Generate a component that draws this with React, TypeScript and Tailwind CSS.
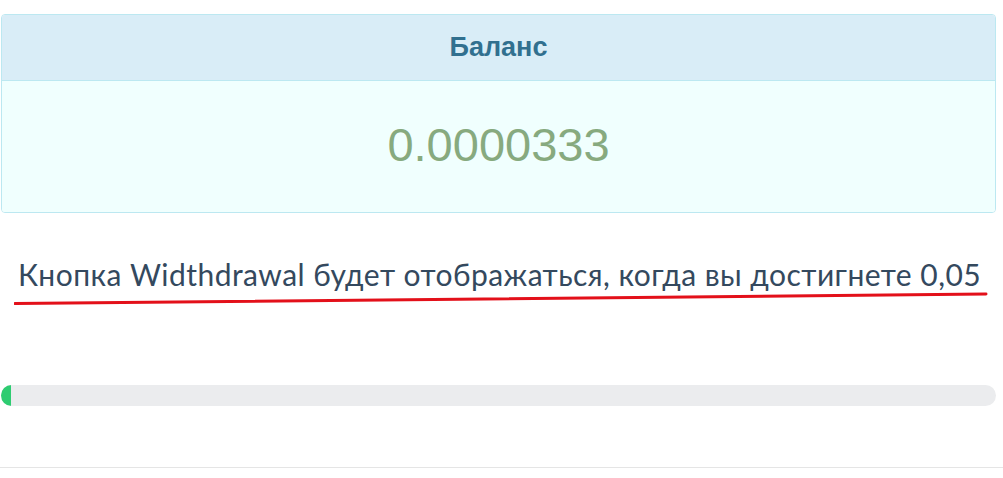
export default function App() {
  const balance = 0.0000333;
  const target = 0.05;
  const percent = Math.max((balance / target) * 100, 1);

  return (
    <div className="w-[1003px] h-[478px] bg-white overflow-hidden">
      <div className="pt-[14px] pl-[1px] pr-[7px]">
        <div className="rounded-[4px] border border-[#bce8f1] overflow-hidden">
          <div className="h-[66px] bg-[#d9edf7] border-b border-[#bce8f1] flex items-center justify-center">
            <h3 className="text-[#31708f] font-bold text-[27px] font-['Liberation_Sans',Arial,sans-serif]">
              Баланс
            </h3>
          </div>
          <div className="h-[131px] bg-[#f0fffe] flex items-center justify-center">
            <span className="text-[#87aa7f] text-[47px] font-['Liberation_Sans',Arial,sans-serif] pb-[2px]">
              0.0000333
            </span>
          </div>
        </div>
      </div>

      <div className="mt-[40px] pl-[18px]">
        <p className="text-[#34495e] text-[30px] leading-[42px] tracking-[0.45px] font-['Lato',sans-serif] whitespace-nowrap">
          Кнопка Widthdrawal будет отображаться, когда вы достигнете 0,05
        </p>
        <svg width="980" height="16" viewBox="0 0 980 16" className="-ml-[4px] -mt-[4px] block">
          <path
            d="M1 12.5 C 250 11, 600 9, 972 3"
            stroke="#e3101a"
            strokeWidth="3"
            fill="none"
            strokeLinecap="round"
          />
        </svg>
      </div>

      <div className="mt-[78px] pl-[1px] pr-[7px]">
        <div className="h-[21px] rounded-full bg-[#ebecee] overflow-hidden">
          <div className="h-full bg-[#2ecc71]" style={{ width: `${percent}%` }} />
        </div>
      </div>

      <div className="mt-[61px] border-t border-[#e5e5e5]" />
    </div>
  );
}
